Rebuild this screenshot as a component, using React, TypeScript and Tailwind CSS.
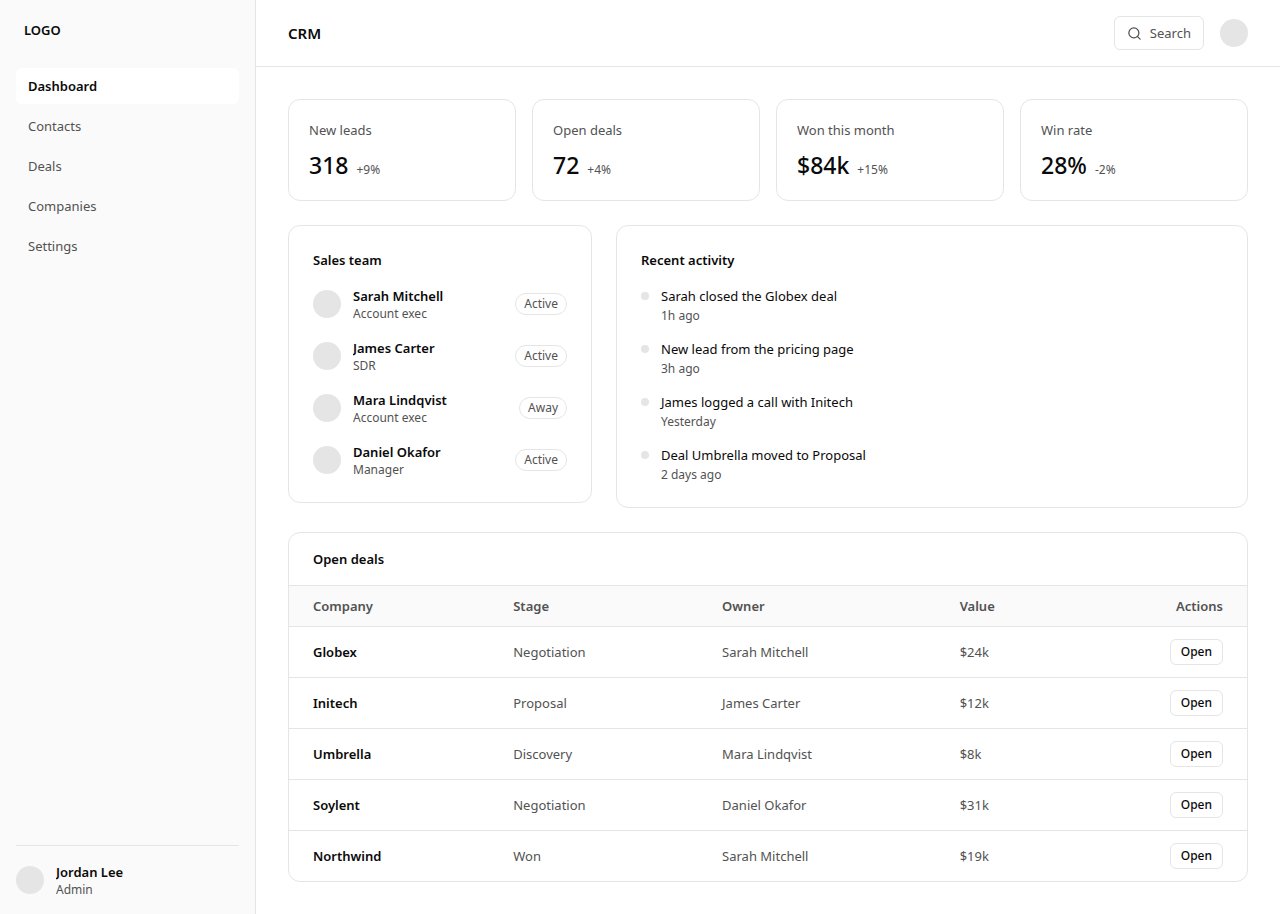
import { Search } from 'lucide-react';

const navItems = ['Dashboard', 'Contacts', 'Deals', 'Companies', 'Settings'];

const stats = [
    { label: 'New leads', value: '318', change: '+9%' },
    { label: 'Open deals', value: '72', change: '+4%' },
    { label: 'Won this month', value: '$84k', change: '+15%' },
    { label: 'Win rate', value: '28%', change: '-2%' },
];

const team = [
    { name: 'Sarah Mitchell', role: 'Account exec', status: 'Active' },
    { name: 'James Carter', role: 'SDR', status: 'Active' },
    { name: 'Mara Lindqvist', role: 'Account exec', status: 'Away' },
    { name: 'Daniel Okafor', role: 'Manager', status: 'Active' },
];

const activity = [
    { text: 'Sarah closed the Globex deal', time: '1h ago' },
    { text: 'New lead from the pricing page', time: '3h ago' },
    { text: 'James logged a call with Initech', time: 'Yesterday' },
    { text: 'Deal Umbrella moved to Proposal', time: '2 days ago' },
];

const deals = [
    { company: 'Globex', stage: 'Negotiation', owner: 'Sarah Mitchell', value: '$24k' },
    { company: 'Initech', stage: 'Proposal', owner: 'James Carter', value: '$12k' },
    { company: 'Umbrella', stage: 'Discovery', owner: 'Mara Lindqvist', value: '$8k' },
    { company: 'Soylent', stage: 'Negotiation', owner: 'Daniel Okafor', value: '$31k' },
    { company: 'Northwind', stage: 'Won', owner: 'Sarah Mitchell', value: '$19k' },
];

function Avatar() {
    return <span className="block size-7 shrink-0 rounded-full bg-[#e5e5e5]" />;
}

function Person({ name, role }: { name: string; role: string }) {
    return (
        <div className="flex min-w-0 items-center gap-3">
            <Avatar />
            <div className="min-w-0">
                <p className="truncate leading-5 font-semibold">{name}</p>
                <p className="truncate text-xs leading-4 text-[#525252]">{role}</p>
            </div>
        </div>
    );
}

function Sidebar() {
    return (
        <aside className="flex w-64 shrink-0 flex-col border-r border-[#e5e5e5] bg-[#fafafa] p-4">
            <div className="mb-6 px-2 py-1 leading-5 font-semibold">LOGO</div>
            <nav className="flex flex-col gap-1">
                {navItems.map((item, i) => (
                    <a
                        key={item}
                        href="#"
                        aria-current={i === 0 ? 'page' : undefined}
                        className={
                            i === 0
                                ? 'rounded-md bg-white px-3 py-2 leading-5 font-semibold'
                                : 'rounded-md px-3 py-2 leading-5 text-[#525252] hover:bg-white'
                        }
                    >
                        {item}
                    </a>
                ))}
            </nav>
            <div className="mt-auto border-t border-[#e5e5e5] pt-4">
                <Person name="Jordan Lee" role="Admin" />
            </div>
        </aside>
    );
}

function Header() {
    return (
        <header className="flex items-center justify-between border-b border-[#e5e5e5] px-8 py-4">
            <h1 className="text-[15px] leading-6 font-semibold">CRM</h1>
            <div className="flex items-center gap-4">
                <button
                    type="button"
                    className="flex items-center gap-2 rounded-md border border-[#e5e5e5] px-3 py-1.5 leading-5 text-[#525252]"
                >
                    <Search size={15} />
                    Search
                </button>
                <Avatar />
            </div>
        </header>
    );
}

function Stats() {
    return (
        <section className="grid grid-cols-2 gap-4 lg:grid-cols-4">
            {stats.map((stat) => (
                <div key={stat.label} className="rounded-xl border border-[#e5e5e5] p-5">
                    <p className="leading-5 text-[#525252]">{stat.label}</p>
                    <div className="mt-2.5 flex items-baseline gap-2">
                        <span className="text-[23px] leading-[30px] font-medium">{stat.value}</span>
                        <span className="text-xs text-[#525252]">{stat.change}</span>
                    </div>
                </div>
            ))}
        </section>
    );
}

function SalesTeam() {
    return (
        <section className="rounded-xl border border-[#e5e5e5] p-6">
            <h2 className="mb-4 leading-5 font-semibold">Sales team</h2>
            <ul className="flex flex-col gap-4">
                {team.map((member) => (
                    <li key={member.name} className="flex items-center justify-between gap-3">
                        <Person name={member.name} role={member.role} />
                        <span className="rounded-full border border-[#e5e5e5] px-2 text-xs leading-5 text-[#525252]">
                            {member.status}
                        </span>
                    </li>
                ))}
            </ul>
        </section>
    );
}

function RecentActivity() {
    return (
        <section className="rounded-xl border border-[#e5e5e5] p-6 lg:col-span-2">
            <h2 className="mb-4 leading-5 font-semibold">Recent activity</h2>
            <ul className="flex flex-col gap-[15px]">
                {activity.map((item) => (
                    <li key={item.text} className="flex gap-3">
                        <span className="mt-1.5 size-2 shrink-0 rounded-full bg-[#e5e5e5]" />
                        <div>
                            <p className="leading-5">{item.text}</p>
                            <p className="mt-0.5 text-xs leading-4 text-[#525252]">{item.time}</p>
                        </div>
                    </li>
                ))}
            </ul>
        </section>
    );
}

function DealsTable() {
    return (
        <section className="overflow-hidden rounded-xl border border-[#e5e5e5]">
            <h2 className="px-6 py-4 leading-5 font-semibold">Open deals</h2>
            <table className="w-full table-fixed text-left leading-5">
                <thead className="bg-[#fafafa] text-[#525252]">
                    <tr className="border-t border-[#e5e5e5]">
                        <th className="w-[20.9%] px-6 py-2.5 font-semibold">Company</th>
                        <th className="w-[21.8%] px-6 py-2.5 font-semibold">Stage</th>
                        <th className="w-[24.8%] px-6 py-2.5 font-semibold">Owner</th>
                        <th className="px-6 py-2.5 font-semibold">Value</th>
                        <th className="px-6 py-2.5 text-right font-semibold">Actions</th>
                    </tr>
                </thead>
                <tbody className="text-[#525252]">
                    {deals.map((deal) => (
                        <tr key={deal.company} className="border-t border-[#e5e5e5]">
                            <td className="px-6 py-3 font-semibold text-[#0a0a0a]">{deal.company}</td>
                            <td className="px-6 py-3">{deal.stage}</td>
                            <td className="px-6 py-3">{deal.owner}</td>
                            <td className="px-6 py-3">{deal.value}</td>
                            <td className="px-6 py-3 text-right">
                                <button
                                    type="button"
                                    className="block ml-auto rounded-md border border-[#e5e5e5] bg-white px-2.5 py-1 text-xs leading-4 font-medium text-[#0a0a0a]"
                                >
                                    Open
                                </button>
                            </td>
                        </tr>
                    ))}
                </tbody>
            </table>
        </section>
    );
}

function App() {
    return (
        <div className="flex min-h-screen bg-white font-['Noto_Sans','Open_Sans',sans-serif] text-[13px] text-[#0a0a0a]">
            <Sidebar />
            <div className="min-w-0 flex-1">
                <Header />
                <main className="flex flex-col gap-6 p-8">
                    <Stats />
                    <div className="grid items-start gap-6 lg:grid-cols-3">
                        <SalesTeam />
                        <RecentActivity />
                    </div>
                    <DealsTable />
                </main>
            </div>
        </div>
    );
}

export default App;
